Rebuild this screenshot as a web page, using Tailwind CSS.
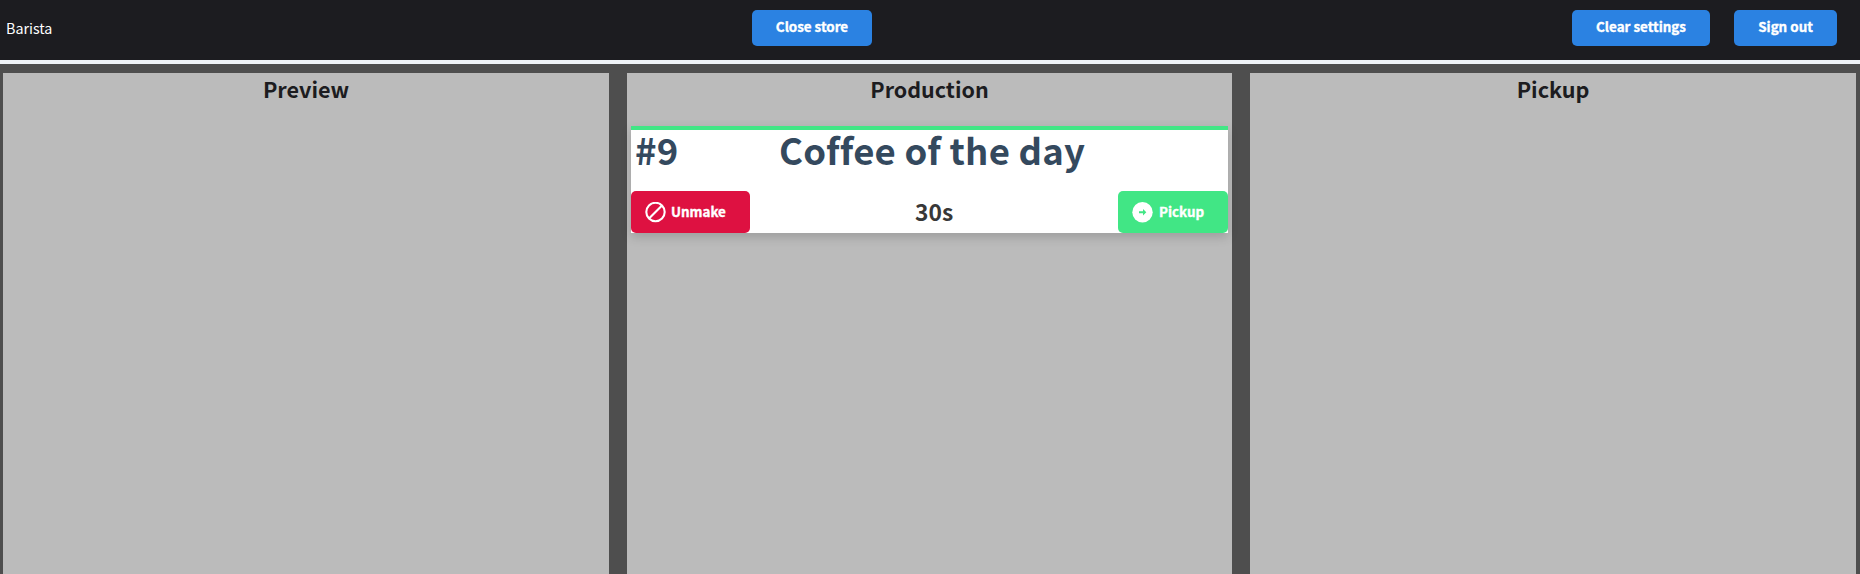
<!DOCTYPE html>
<html lang="en">
<head>
<meta charset="utf-8">
<title>Barista</title>
<script src="https://cdn.jsdelivr.net/npm/@tailwindcss/browser@4"></script>
</head>
<body class="flex h-screen flex-col overflow-hidden bg-[#4e4e4e] font-['Noto_Sans_CJK_SC',sans-serif] text-[14.3px]">
  <header class="grid h-[64px] shrink-0 grid-cols-[752px_1fr_auto] items-start border-b-4 border-[#f0f4f8] bg-[#1c1c20] pr-[23px] text-white">
    <div class="pt-[18px] pl-[6px] leading-[20px]">Barista</div>
    <div class="pt-[10px]"><button class="h-[36px] w-[120px] rounded-[5px] bg-[#2b82e2] pb-[5px] text-[13.4px] font-bold leading-[20px] [-webkit-text-stroke:0.35px_white]">Close store</button></div>
    <div class="flex gap-6 pt-[10px] text-[13.4px] [-webkit-text-stroke:0.35px_white]">
      <button class="h-[36px] w-[138px] rounded-[5px] bg-[#2b82e2] pb-[5px] font-bold leading-[20px]">Clear settings</button>
      <button class="h-[36px] w-[103px] rounded-[5px] bg-[#2b82e2] pb-[5px] font-bold leading-[20px]">Sign out</button>
    </div>
  </header>
  <main class="grid flex-1 grid-cols-[606px_605px_606px] gap-[18px] pt-[9px] pl-[3px]">
    <section class="bg-[#bbb]">
      <h2 class="text-center text-[21.6px] font-bold leading-[31px] text-[#1c1c20]">Preview</h2>
    </section>
    <section class="bg-[#bbb] px-1">
      <h2 class="text-center text-[21.5px] font-bold leading-[31px] text-[#1c1c20]">Production</h2>
      <article class="mt-[22px] flex h-[107px] flex-col justify-between border-t-4 border-[#41e685] bg-white shadow-[0_4px_10px_rgba(0,0,0,0.16)]">
        <div class="grid grid-cols-[148px_1fr] text-[36.5px] font-bold leading-[40px] tracking-[0.2px] text-[#34495e]">
          <span class="pl-[4px]">#9</span>
          <span>Coffee of the day</span>
        </div>
        <div class="grid h-[42px] grid-cols-[119px_1fr_110px] items-center font-bold">
          <button class="flex h-[42px] items-center gap-[5px] rounded-[5px] bg-[#de1141] pl-[14px] text-white">
            <svg class="size-[21px]" viewBox="0 0 21 21" fill="none" stroke="currentColor" stroke-width="2.1"><circle cx="10.5" cy="10" r="9.2"/><path d="M4 16.5 17 3.5"/></svg>
            <span class="pb-[3px] text-[13.4px] leading-[20px] [-webkit-text-stroke:0.35px_white]">Unmake</span>
          </button>
          <span class="pl-[165px] text-[22.8px] leading-[36px] text-[#383838]">30s</span>
          <button class="flex h-[42px] items-center gap-[6px] rounded-[5px] bg-[#41e685] pl-[14px] text-white">
            <svg class="size-[21px]" viewBox="0 0 21 21"><circle cx="10.5" cy="10.2" r="10.2" fill="currentColor"/><path d="M7 9.2h4V6.9l3.3 3.3-3.3 3.3v-2.3H7z" fill="#41e685"/></svg>
            <span class="pb-[3px] text-[13.4px] leading-[20px] [-webkit-text-stroke:0.35px_white]">Pickup</span>
          </button>
        </div>
      </article>
    </section>
    <section class="bg-[#bbb]">
      <h2 class="text-center text-[21.6px] font-bold leading-[31px] text-[#1c1c20]">Pickup</h2>
    </section>
  </main>
</body>
</html>
